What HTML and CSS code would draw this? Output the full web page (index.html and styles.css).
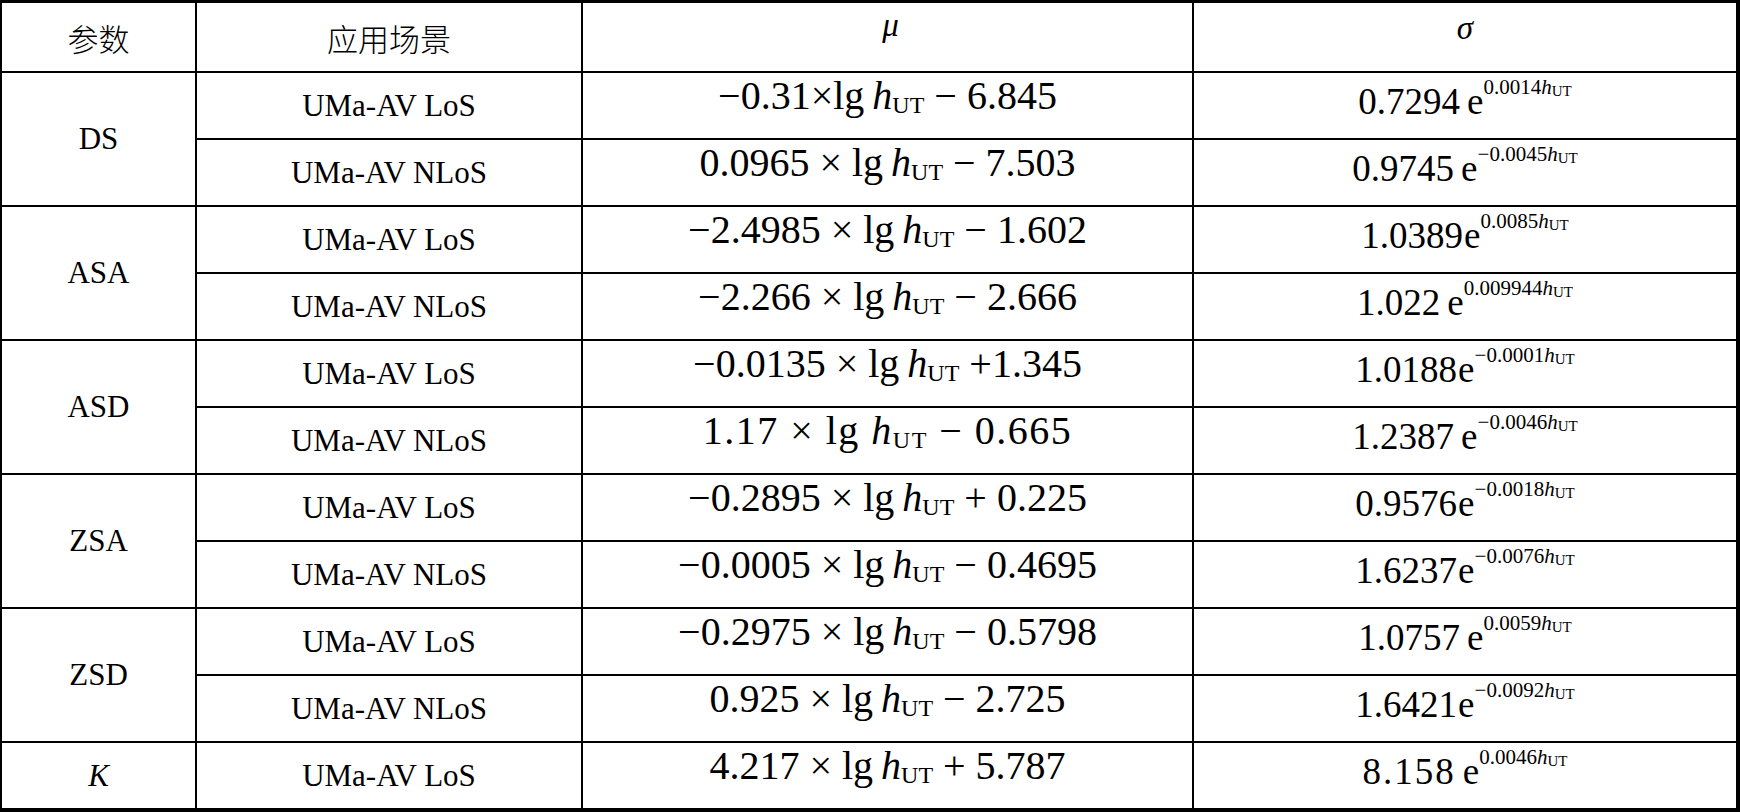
FILE: index.html
```html
<!DOCTYPE html>
<html lang="zh-CN">
<head>
    <meta charset="UTF-8">
    <title>信道参数</title>
    <link rel="stylesheet" href="styles.css">
</head>
<body>
    <div class="table">
        <div class="cell head cjk"><span>参数</span></div>
        <div class="cell head cjk"><span>应用场景</span></div>
        <div class="cell head greek"><i>μ</i></div>
        <div class="cell head greek sig"><i>σ</i></div>

        <div class="cell param"><span>DS</span></div>
        <div class="cell"><span>UMa-AV LoS</span></div>
        <div class="cell mu"><span>−0.31×lg&#8201;<i>h</i><sub>UT</sub> − 6.845</span></div>
        <div class="cell sigma"><span>0.7294<span class="e wide">e</span><sup>0.0014<i>h</i><sub>UT</sub></sup></span></div>
        <div class="cell"><span>UMa-AV NLoS</span></div>
        <div class="cell mu"><span>0.0965 × lg&#8201;<i>h</i><sub>UT</sub> − 7.503</span></div>
        <div class="cell sigma"><span>0.9745<span class="e wide">e</span><sup>−0.0045<i>h</i><sub>UT</sub></sup></span></div>

        <div class="cell param"><span>ASA</span></div>
        <div class="cell"><span>UMa-AV LoS</span></div>
        <div class="cell mu"><span>−2.4985 × lg&#8201;<i>h</i><sub>UT</sub> − 1.602</span></div>
        <div class="cell sigma"><span>1.0389<span class="e">e</span><sup>0.0085<i>h</i><sub>UT</sub></sup></span></div>
        <div class="cell"><span>UMa-AV NLoS</span></div>
        <div class="cell mu"><span>−2.266 × lg&#8201;<i>h</i><sub>UT</sub> − 2.666</span></div>
        <div class="cell sigma"><span>1.022<span class="e wide">e</span><sup>0.009944<i>h</i><sub>UT</sub></sup></span></div>

        <div class="cell param"><span>ASD</span></div>
        <div class="cell"><span>UMa-AV LoS</span></div>
        <div class="cell mu"><span>−0.0135 × lg&#8201;<i>h</i><sub>UT</sub> +1.345</span></div>
        <div class="cell sigma"><span>1.0188<span class="e">e</span><sup>−0.0001<i>h</i><sub>UT</sub></sup></span></div>
        <div class="cell"><span>UMa-AV NLoS</span></div>
        <div class="cell mu spread"><span>1.17 × lg <i>h</i><sub>UT</sub> − 0.665</span></div>
        <div class="cell sigma"><span>1.2387<span class="e wide">e</span><sup>−0.0046<i>h</i><sub>UT</sub></sup></span></div>

        <div class="cell param"><span>ZSA</span></div>
        <div class="cell"><span>UMa-AV LoS</span></div>
        <div class="cell mu"><span>−0.2895 × lg&#8201;<i>h</i><sub>UT</sub> + 0.225</span></div>
        <div class="cell sigma"><span>0.9576<span class="e">e</span><sup>−0.0018<i>h</i><sub>UT</sub></sup></span></div>
        <div class="cell"><span>UMa-AV NLoS</span></div>
        <div class="cell mu"><span>−0.0005 × lg&#8201;<i>h</i><sub>UT</sub> − 0.4695</span></div>
        <div class="cell sigma"><span>1.6237<span class="e">e</span><sup>−0.0076<i>h</i><sub>UT</sub></sup></span></div>

        <div class="cell param"><span>ZSD</span></div>
        <div class="cell"><span>UMa-AV LoS</span></div>
        <div class="cell mu"><span>−0.2975 × lg&#8201;<i>h</i><sub>UT</sub> − 0.5798</span></div>
        <div class="cell sigma"><span>1.0757<span class="e wide">e</span><sup>0.0059<i>h</i><sub>UT</sub></sup></span></div>
        <div class="cell"><span>UMa-AV NLoS</span></div>
        <div class="cell mu"><span>0.925 × lg&#8201;<i>h</i><sub>UT</sub> − 2.725</span></div>
        <div class="cell sigma"><span>1.6421<span class="e">e</span><sup>−0.0092<i>h</i><sub>UT</sub></sup></span></div>

        <div class="cell"><i>K</i></div>
        <div class="cell"><span>UMa-AV LoS</span></div>
        <div class="cell mu"><span>4.217 × lg&#8201;<i>h</i><sub>UT</sub> + 5.787</span></div>
        <div class="cell sigma"><span><span class="spaced">8.158</span><span class="e wide">e</span><sup>0.0046<i>h</i><sub>UT</sub></sup></span></div>
    </div>
</body>
</html>
```

FILE: styles.css
```css
body {
    margin: 0;
    background: #fff;
    color: #000;
    font-family: "Liberation Serif", "Noto Sans CJK SC", serif;
}
.table {
    display: grid;
    grid-template-columns: 193px 384px 609px 542px;
    grid-template-rows: 68px repeat(11, 65px);
    gap: 2px;
    width: max-content;
    background: #000;
    border: solid #000;
    border-width: 3px 4px 4px 2px;
}
.cell {
    background: #fff;
    display: flex;
    align-items: center;
    justify-content: center;
    font-size: 31px;
    white-space: pre;
}
.param { grid-row: span 2; }
.cjk {
    font-family: "Noto Sans CJK SC", sans-serif;
    font-weight: 200;
    font-size: 31px;
}
.greek {
    align-items: flex-start;
    padding-top: 4px;
    padding-left: 6px;
    font-size: 33px;
}
.greek.sig { padding-top: 7px; padding-left: 0; }
.mu {
    font-size: 40px;
    line-height: 40px;
    padding-bottom: 19px;
}
.mu sub {
    font-size: 24px;
    vertical-align: -4px;
    line-height: 0;
}
.spread { letter-spacing: 1.5px; }
.sigma {
    font-size: 37px;
    line-height: 37px;
    padding-bottom: 8px;
}
.sigma .e { margin-left: 1px; }
.sigma .e.wide { margin-left: 7px; }
.spaced { letter-spacing: 2px; }
.sigma sup {
    font-size: 21px;
    vertical-align: 20px;
    line-height: 0;
}
.sigma sup sub {
    font-size: 15px;
    vertical-align: -2px;
}
```
